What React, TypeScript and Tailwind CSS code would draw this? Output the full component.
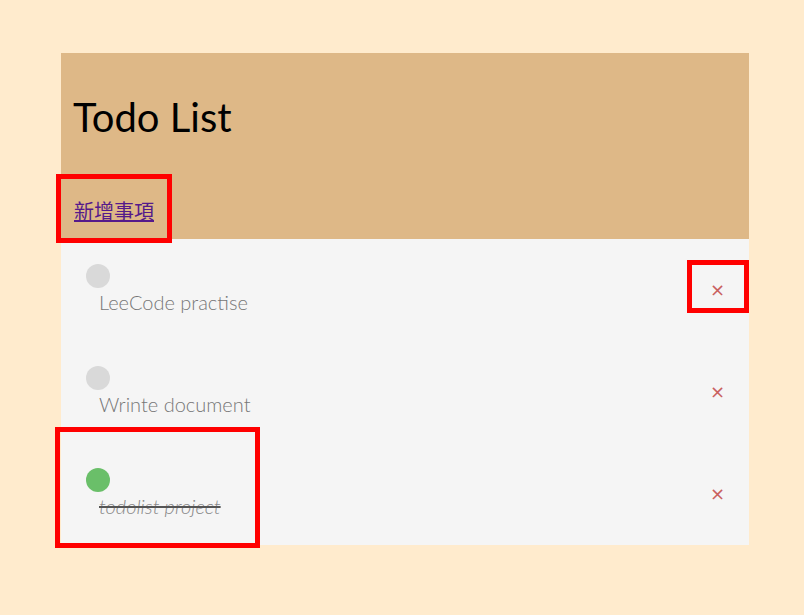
import React from "react";

const items = [
  { text: "LeeCode practise", done: false },
  { text: "Wrinte document", done: false },
  { text: "todolist project", done: true },
];

export default function App() {
  return (
    <div className="relative min-h-[615px] w-full bg-[#ffebcd] pt-[53px]" style={{ fontFamily: "Lato, 'Noto Sans CJK TC', sans-serif" }}>
      <div className="ml-[61px] w-[688px]">
        <header className="h-[186px] bg-[#deb887] pl-[12px] pt-[40px]">
          <h1 className="text-[40px] leading-[48px] font-normal text-black">Todo List</h1>
          <a href="#" className="mt-[56px] ml-[1px] inline-block text-[20px] leading-[28px] text-[#551a8b] underline" style={{ fontFamily: "'Noto Sans CJK TC', sans-serif" }}>
            新增事項
          </a>
        </header>
        <ul className="bg-[#f5f5f5]">
          {items.map((it) => (
            <li key={it.text} className="flex h-[102px] justify-between">
              <div className="pl-[25px] pt-[25px]">
                <div className={`h-[24px] w-[24px] rounded-full ${it.done ? "bg-[#6abf69]" : "bg-[#d9d9d9]"}`} />
                <div
                  className={`ml-[13px] mt-[1px] text-[20px] leading-[26px] font-light ${
                    it.done ? "italic text-[#888] line-through decoration-[#555]" : "text-[#777]"
                  }`}
                >
                  {it.text}
                </div>
              </div>
              <button className="mr-[24px] self-center text-[18px] leading-none text-[#c9605e]" style={{ fontFamily: "'DejaVu Sans', sans-serif" }}>
                ×
              </button>
            </li>
          ))}
        </ul>
      </div>
      <div className="pointer-events-none absolute left-[56px] top-[174px] h-[69px] w-[116px] border-[5px] border-[#ff0000]" />
      <div className="pointer-events-none absolute left-[687px] top-[260px] h-[53px] w-[62px] border-[5px] border-[#ff0000]" />
      <div className="pointer-events-none absolute left-[55px] top-[427px] h-[121px] w-[205px] border-[5px] border-[#ff0000]" />
    </div>
  );
}
